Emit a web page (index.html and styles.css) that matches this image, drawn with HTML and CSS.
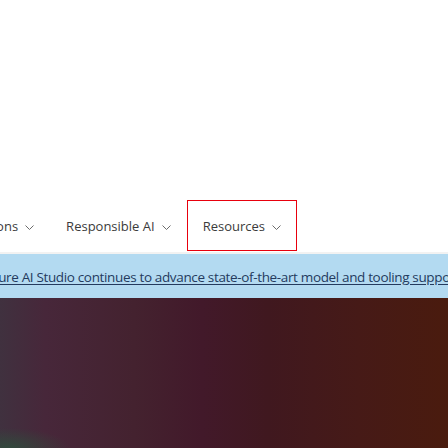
FILE: index.html
```html
<!DOCTYPE html>
<html>
<head>
<meta charset="utf-8">
<link rel="stylesheet" href="styles.css">
</head>
<body>
<header class="header">
  <nav class="nav">
    <div class="nav-item first"><span>Solutions</span><svg class="chev" viewBox="0 0 9 5"><path d="M0.5 0.5 L4.5 4.5 L8.5 0.5" /></svg></div>
    <div class="nav-item"><span>Responsible AI</span><svg class="chev" viewBox="0 0 9 5"><path d="M0.5 0.5 L4.5 4.5 L8.5 0.5" /></svg></div>
    <div class="nav-item focused"><span>Resources</span><svg class="chev" viewBox="0 0 9 5"><path d="M0.5 0.5 L4.5 4.5 L8.5 0.5" /></svg></div>
  </nav>
</header>
<div class="divider"></div>
<div class="banner">
  <a class="banner-link" href="#">Azure AI Studio continues to advance state-of-the-art model and tooling support</a>
</div>
<section class="hero"></section>
</body>
</html>
```
FILE: styles.css
```css
html, body {
  margin: 0;
  padding: 0;
  background: #ffffff;
  overflow: hidden;
  width: 448px;
  height: 448px;
}
body {
  font-family: "Open Sans", "Noto Sans", sans-serif;
}
.header {
  height: 252px;
  display: flex;
  flex-direction: column;
  justify-content: flex-end;
}
.nav {
  display: flex;
  align-items: stretch;
  height: 51px;
  margin-bottom: 1px;
  margin-left: -54px;
  white-space: nowrap;
}
.nav-item {
  display: flex;
  align-items: center;
  gap: 7px;
  padding: 0 16px;
  font-size: 13px;
  color: #3b3b3b;
  box-sizing: border-box;
}
.nav-item.first {
  padding-right: 16px;
}
.nav-item.focused {
  outline: 1px solid #e8000d;
  outline-offset: -1px;
}
.chev {
  width: 9px;
  height: 5px;
  fill: none;
  stroke: #6b6b6b;
  stroke-width: 1;
  margin-top: 3px;
}
.divider {
  height: 2px;
  background: #f2f2f2;
}
.banner {
  height: 44px;
  background: #b3daf1;
  display: flex;
  align-items: center;
  white-space: nowrap;
  overflow: hidden;
}
.banner-link {
  margin-left: -16px;
  margin-top: 1px;
  font-size: 13.5px;
  letter-spacing: -0.35px;
  color: #243a5e;
  text-decoration: underline;
  text-underline-offset: 2px;
}
.hero {
  height: 150px;
  background:
    radial-gradient(ellipse 60px 20px at 10px 150px, rgba(40, 90, 60, 0.6), rgba(40, 90, 60, 0) 100%),
    linear-gradient(to right, #40313f 0%, #47273a 10%, #44222f 30%, #42192a 45%, #40181f 60%, #461a17 80%, #4a1b0e 100%);
}
```
